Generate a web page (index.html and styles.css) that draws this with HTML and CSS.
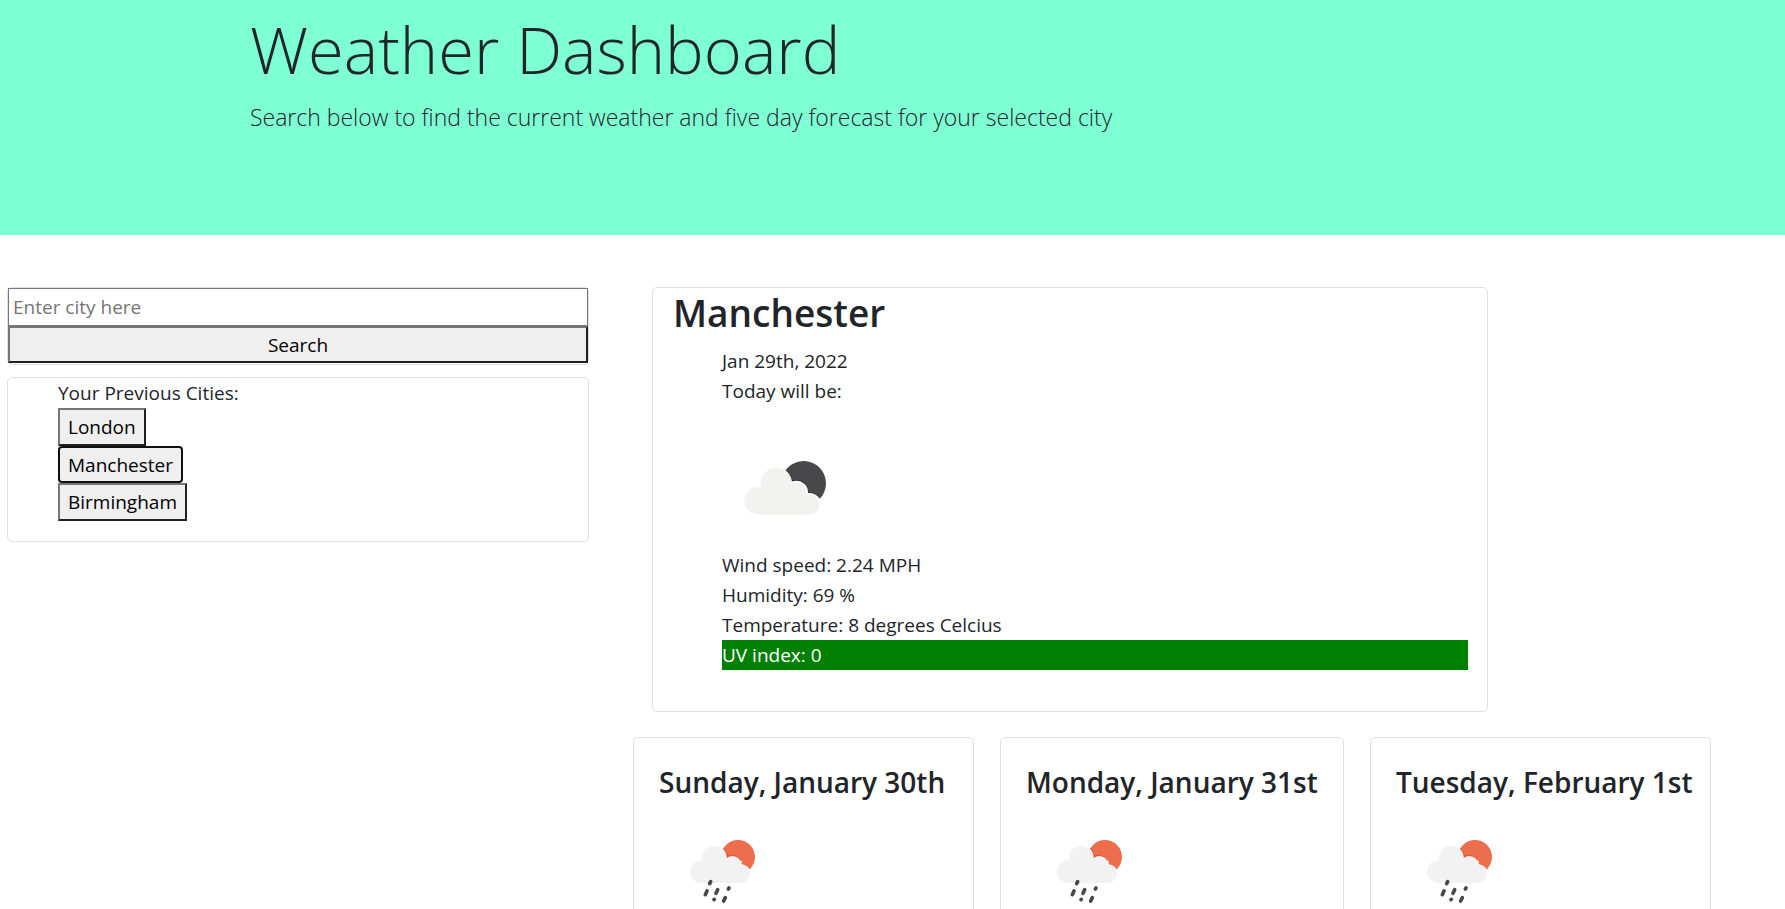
FILE: index.html
```
<!DOCTYPE html>
<html lang="en">
<head>
<meta charset="utf-8">
<meta name="viewport" content="width=device-width, initial-scale=1">
<title>Weather Dashboard</title>
<link rel="stylesheet" href="styles.css">
</head>
<body>
<svg class="sprite" aria-hidden="true">
  <symbol id="rain" viewBox="0 0 125 125">
    <g transform="translate(21 20) scale(0.3333)">
      <circle cx="174" cy="84" r="51" fill="#ec6e4c"/>
      <path d="M130 58Q139 68 142 82Q158 76 170 86Q180 94 180 108Q198 108 208 124" fill="none" stroke="#e4522c" stroke-width="4"/>
      <g fill="#fff">
        <circle cx="102" cy="86" r="38"/><circle cx="157" cy="107" r="26"/><circle cx="183" cy="136" r="30"/>
        <rect x="60" y="95" width="125" height="60"/>
      </g>
      <g fill="#f2f2f2">
        <circle cx="64" cy="128" r="34"/><circle cx="102" cy="86" r="36"/><circle cx="156" cy="107" r="24"/><circle cx="182" cy="134" r="28"/>
        <rect x="64" y="96" width="108" height="66"/><rect x="150" y="122" width="32" height="40"/>
      </g>
      <path d="M92 158l-3 6M81 186l-5 11M113 182l-5 11M147 177l-2 3M103 211l-1 1M136 206l-5 10" fill="none" stroke="#48484a" stroke-width="11" stroke-linecap="round"/>
    </g>
  </symbol>
</svg>
<header class="hero">
  <h1 class="hero-title">Weather Dashboard</h1>
  <p class="hero-lead">Search below to find the current weather and five day forecast for your selected city</p>
</header>
<main class="layout">
  <aside class="sidebar">
    <form class="card search">
      <input class="search-input" type="text" placeholder="Enter city here" aria-label="City">
      <button class="search-button" type="button">Search</button>
    </form>
    <section class="card history">
      <p class="line">Your Previous Cities:</p>
      <button class="city" type="button">London</button>
      <button class="city city-active" type="button">Manchester</button>
      <button class="city" type="button">Birmingham</button>
    </section>
  </aside>
  <div class="content">
    <section class="card current">
      <h2 class="current-city">Manchester</h2>
      <ul class="details">
        <li>Jan 29th, 2022</li>
        <li>Today will be:</li>
        <li class="picture">
          <svg class="current-icon" viewBox="0 0 125 145" role="img" aria-label="Broken clouds">
            <g transform="translate(18 43) scale(0.3333)">
              <circle cx="191" cy="103" r="67" fill="#48484a"/>
              <path d="M139 68Q152 80 155 97Q178 90 192 104Q202 114 203 132Q222 132 237 149" fill="none" stroke="#2c2c2e" stroke-width="5"/>
              <g fill="#fff">
                <circle cx="108" cy="103" r="48"/><circle cx="169" cy="130" r="35"/><circle cx="208" cy="168" r="36"/>
                <rect x="60" y="115" width="135" height="75"/>
              </g>
              <g fill="#f2f2f0">
                <circle cx="55" cy="155" r="42"/><circle cx="108" cy="103" r="46"/><circle cx="168" cy="131" r="31"/><circle cx="207" cy="166" r="31"/>
                <rect x="55" y="115" width="130" height="82"/><rect x="165" y="145" width="42" height="52"/>
              </g>
            </g>
          </svg>
        </li>
        <li>Wind speed: 2.24 MPH</li>
        <li>Humidity: 69 %</li>
        <li>Temperature: 8 degrees Celcius</li>
        <li class="uv">UV index: 0</li>
      </ul>
    </section>
    <div class="forecast">
      <section class="card day">
        <h3 class="day-title">Sunday, January 30th</h3>
        <svg class="day-icon" role="img" aria-label="Rain"><use href="#rain"/></svg>
      </section>
      <section class="card day">
        <h3 class="day-title">Monday, January 31st</h3>
        <svg class="day-icon" role="img" aria-label="Rain"><use href="#rain"/></svg>
      </section>
      <section class="card day">
        <h3 class="day-title">Tuesday, February 1st</h3>
        <svg class="day-icon" role="img" aria-label="Rain"><use href="#rain"/></svg>
      </section>
    </div>
  </div>
</main>
</body>
</html>
```
FILE: styles.css
```
* { box-sizing: border-box; }
body {
  margin: 0;
  background: #fff;
  color: #212529;
  font-family: "Segoe UI", "Open Sans", "Noto Sans", sans-serif;
  font-size: 19px;
  line-height: 30px;
}
h1, h2, h3, p, ul { margin: 0; padding: 0; }
.sprite { display: none; }
.card { border: 1px solid #dfdfdf; border-radius: 5px; background: #fff; }

.hero { background: #7fffd4; padding: 7px 250px 99px; }
.hero-title { font-size: 65px; font-weight: 300; line-height: 84px; white-space: nowrap; }
.hero-lead { margin-top: 7px; font-size: 23px; font-weight: 300; line-height: 38px; }

.layout {
  display: grid;
  grid-template-columns: minmax(0, 582fr) minmax(0, 1152fr);
  column-gap: 44px;
  align-items: start;
  padding: 52px 0 0 7px;
}
.sidebar { display: grid; gap: 12px; }
.search { display: grid; padding-bottom: 1px; }
.search-input, .search-button, .city { font: inherit; color: #000; border-radius: 0; }
.search-input {
  width: 100%;
  height: 38px;
  padding: 2px 4px;
  border: 1px solid #767676;
  background: #fff;
}
.search-input::placeholder { color: #757575; opacity: 1; }
.search-button, .city {
  height: 37px;
  padding: 0 8px;
  border: 2px solid;
  border-color: #767676 #212121 #212121 #767676;
  background: #efefef;
}
.history { display: flex; flex-direction: column; align-items: flex-start; padding: 0 0 20px 50px; }
.city { height: 38px; }
.city-active { height: 37px; border-color: #101010; border-radius: 4px; }

.current { margin: 0 297px 0 19px; padding: 0 19px 41px 20px; }
.current-city { font-size: 37px; font-weight: 600; line-height: 50px; margin-bottom: 8px; }
.details { list-style: none; padding-left: 49px; }
.picture { height: 144px; }
.current-icon { display: block; width: 125px; height: 145px; }
.uv { background: green; color: #fff; }

.forecast {
  display: grid;
  grid-template-columns: minmax(0, 341fr) minmax(0, 344fr) minmax(0, 341fr);
  gap: 26px;
  margin: 25px 74px 0 0;
}
.day { padding: 25px; }
.day-title { font-size: 28px; font-weight: 600; line-height: 38px; white-space: nowrap; }
.day-icon { display: block; width: 125px; height: 125px; margin-top: 8px; }
```
